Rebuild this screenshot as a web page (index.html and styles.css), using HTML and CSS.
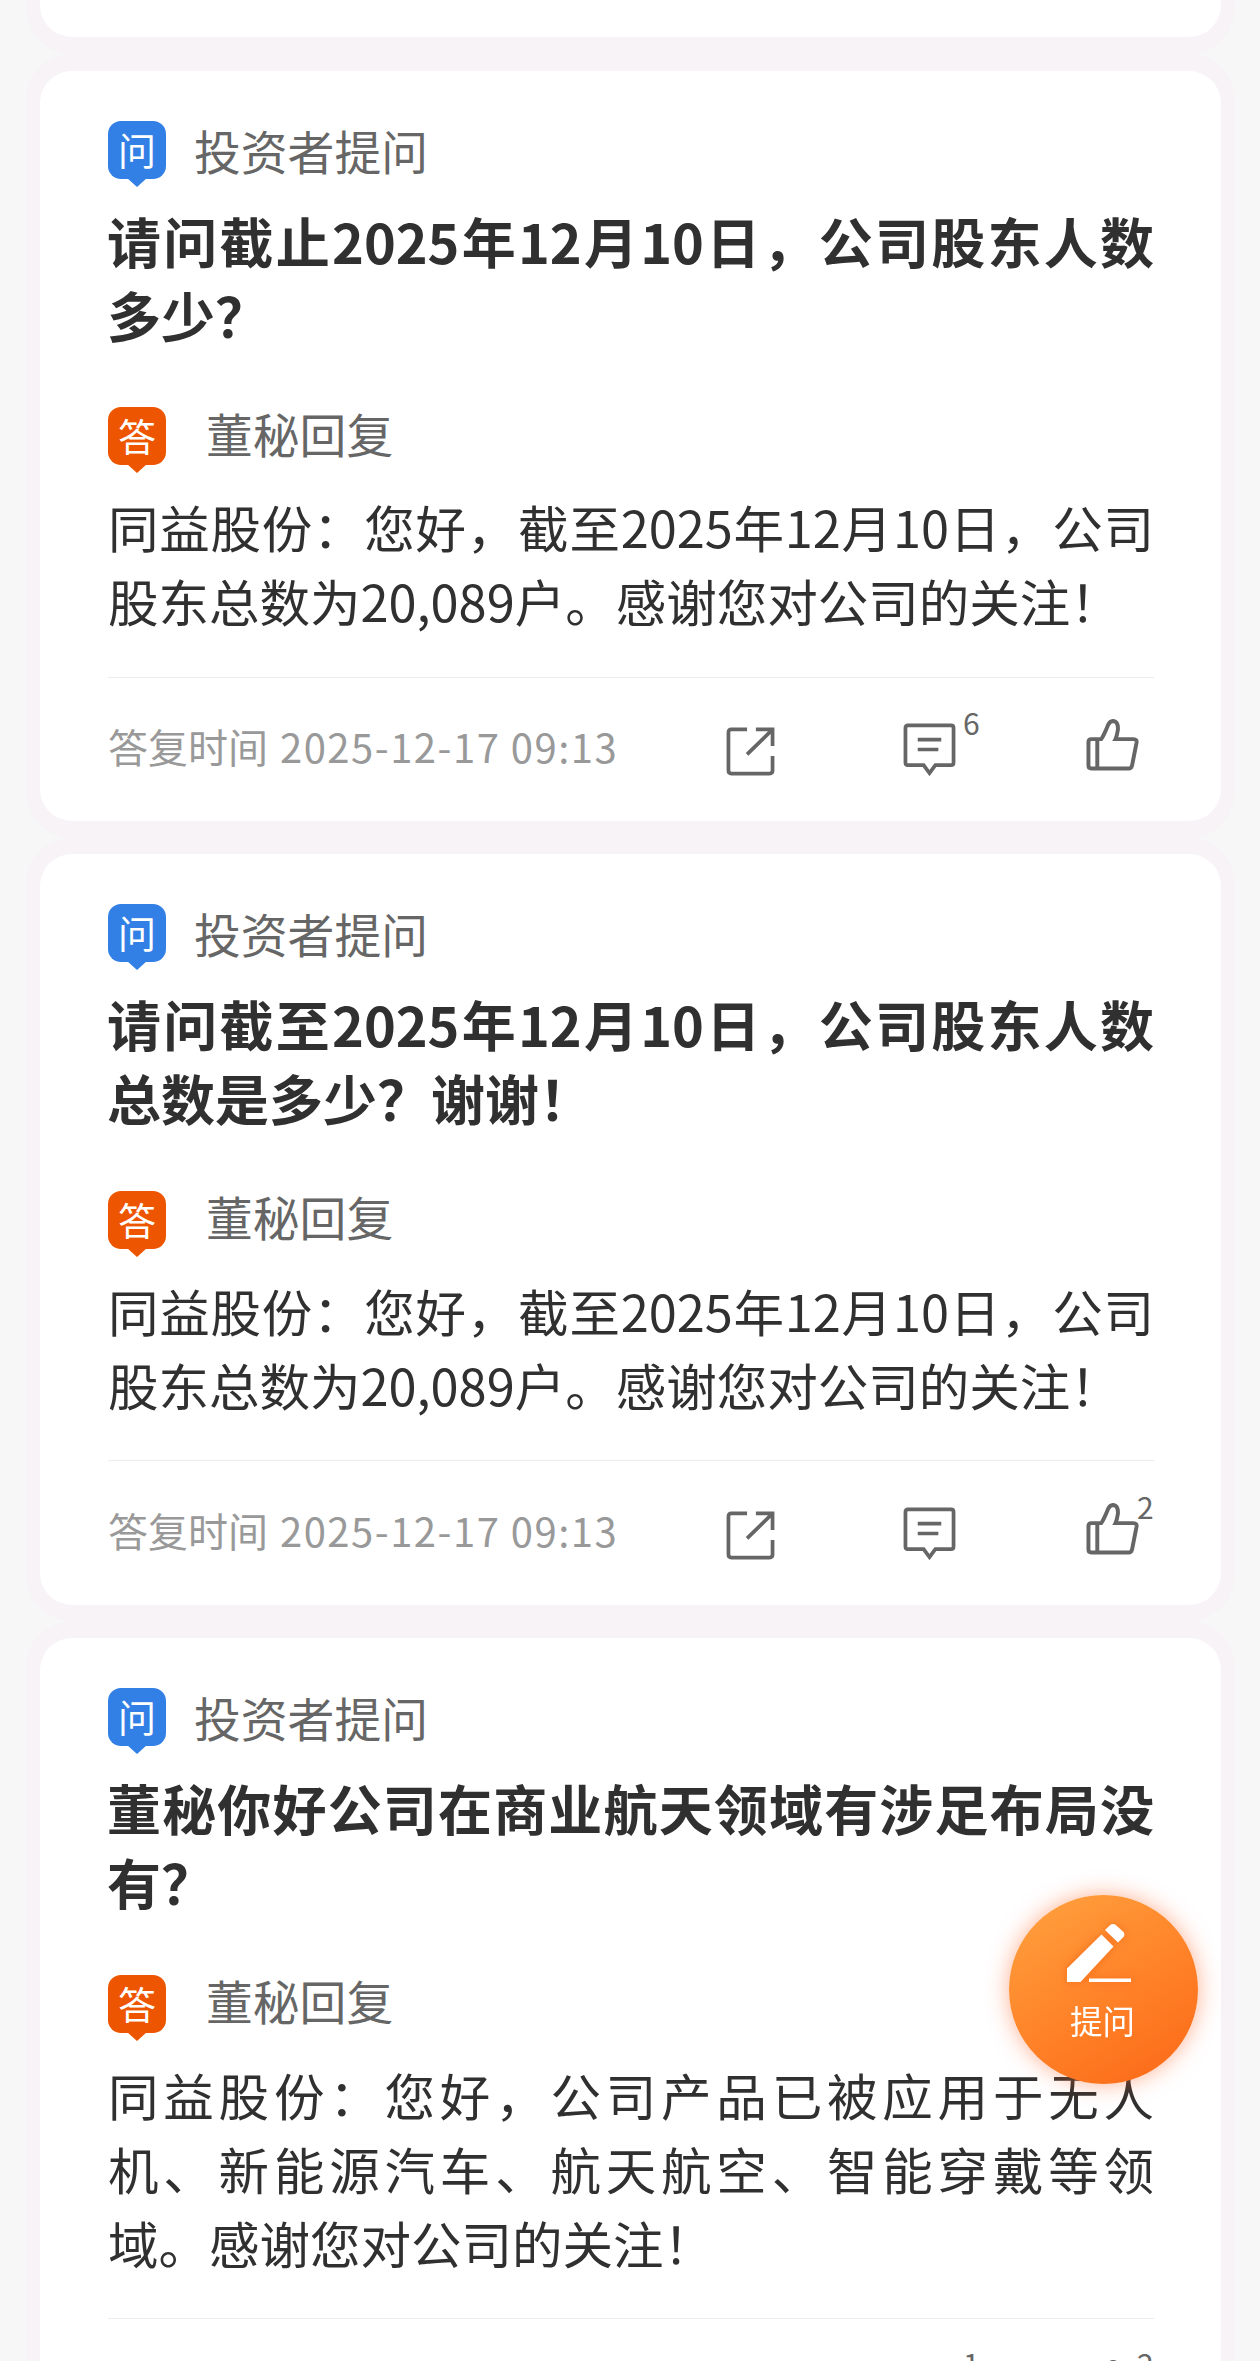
FILE: index.html
```html
<!DOCTYPE html>
<html lang="zh-CN">
<head>
  <meta charset="UTF-8">
  <meta name="viewport" content="width=device-width, initial-scale=1.0">
  <title>投资者问答</title>
  <link rel="stylesheet" href="styles.css">
</head>
<body>

  <!-- 图标 -->
  <svg class="sprite">
    <symbol id="i-share" viewBox="0 0 50 50">
      <path d="M21.5 2.5H5.5Q2.5 2.5 2.5 5.5V44.5Q2.5 47.5 5.5 47.5H44.5Q47.5 47.5 47.5 44.5V29.5M30.5 2.5H47.5V19.5M46.5 3.5L21.5 28"/>
    </symbol>
    <symbol id="i-comment" viewBox="0 0 54 54">
      <path d="M5 2.5H49Q51.5 2.5 51.5 5V40.5Q51.5 43 49 43H33L27 51L21 43H5Q2.5 43 2.5 40.5V5Q2.5 2.5 5 2.5ZM15 17H39M15 27H36"/>
    </symbol>
    <symbol id="i-like" viewBox="0 0 54 54">
      <path d="M11.5 20.5V50M5.5 20.5H15.5Q18 17 22.5 6Q24.5 1.8 28 2Q33 2.8 32.5 11Q31.5 17.5 30 20.5H48.5Q52 20.5 51.5 24L47 47Q46.3 50.5 43.5 50.5H5.5Q2.5 50.5 2.5 47.5V23.5Q2.5 20.5 5.5 20.5Z"/>
    </symbol>
  </svg>

  <main class="list">
    <div class="item item-prev"><section class="card"></section></div>

    <div class="item">
      <section class="card">
        <div class="who"><span class="badge ask">问</span><span class="name">投资者提问</span></div>
        <h2 class="question">请问截止2025年12月10日，公司股东人数多少？</h2>
        <div class="who reply"><span class="badge answer">答</span><span class="name">董秘回复</span></div>
        <p class="content">同益股份：您好，截至2025年12月10日，公司股东总数为20,089户。感谢您对公司的关注！</p>
        <div class="footer">
          <div class="time">答复时间 <span>2025-12-17 09:13</span></div>
          <div class="action share"><svg><use href="#i-share"/></svg></div>
          <div class="action comment"><svg><use href="#i-comment"/></svg><sup>6</sup></div>
          <div class="action like"><svg><use href="#i-like"/></svg></div>
        </div>
      </section>
    </div>

    <div class="item">
      <section class="card">
        <div class="who"><span class="badge ask">问</span><span class="name">投资者提问</span></div>
        <h2 class="question">请问截至2025年12月10日，公司股东人数总数是多少？谢谢！</h2>
        <div class="who reply"><span class="badge answer">答</span><span class="name">董秘回复</span></div>
        <p class="content">同益股份：您好，截至2025年12月10日，公司股东总数为20,089户。感谢您对公司的关注！</p>
        <div class="footer">
          <div class="time">答复时间 <span>2025-12-17 09:13</span></div>
          <div class="action share"><svg><use href="#i-share"/></svg></div>
          <div class="action comment"><svg><use href="#i-comment"/></svg></div>
          <div class="action like"><svg><use href="#i-like"/></svg><sup>2</sup></div>
        </div>
      </section>
    </div>

    <div class="item">
      <section class="card">
        <div class="who"><span class="badge ask">问</span><span class="name">投资者提问</span></div>
        <h2 class="question">董秘你好公司在商业航天领域有涉足布局没有？</h2>
        <div class="who reply"><span class="badge answer">答</span><span class="name">董秘回复</span></div>
        <p class="content">同益股份：您好，公司产品已被应用于无人机、新能源汽车、航天航空、智能穿戴等领域。感谢您对公司的关注！</p>
        <div class="footer">
          <div class="time"></div>
          <div class="action share"><svg><use href="#i-share"/></svg></div>
          <div class="action comment"><svg><use href="#i-comment"/></svg><sup>1</sup></div>
          <div class="action like"><svg><use href="#i-like"/></svg><sup>2</sup></div>
        </div>
      </section>
    </div>
  </main>

  <!-- 提问按钮 -->
  <button class="ask-btn">
    <svg viewBox="0 0 66 60">
      <path d="M1 45.5L35.5 11.5L47.5 23.5L14.5 59H1Z"/>
      <path d="M39 7L44.5 1.8Q47 0 49.5 1.8L57 8.5Q59.5 11 57.5 14L52 19.5Z"/>
      <path d="M23 55.5H65V59H23Z"/>
    </svg>
    <span>提问</span>
  </button>

</body>
</html>
```
FILE: styles.css
```css
* { box-sizing: border-box; }
html { overflow: hidden; }
body {
  margin: 0;
  height: 2361px;
  overflow: hidden;
  background: #f7f7f7;
  color: #303030;
  font-family: "Noto Sans CJK SC", sans-serif;
  text-spacing-trim: space-all;
}
.sprite { display: none; }

/* 列表 */
.list { padding: 0 25px 0 26px; }
.item {
  padding: 16.75px 14px;
  background: #f7f3f7;
  border-radius: 46px;
}
.item-prev { height: 54px; padding-top: 0; border-radius: 0 0 46px 46px; }
.card {
  background: #fff;
  border-radius: 32px;
  padding: 50px 67px 0 68px;
}
.item-prev .card { height: 37px; padding: 0; border-radius: 0 0 32px 32px; }

/* 提问 / 回复 */
.who { display: flex; align-items: center; height: 58px; }
.name { margin-left: 28px; font-size: 46.8px; line-height: 58px; color: #666; }
.reply { margin-top: 55.5px; }
.reply .name { margin: -7px 0 0 40px; }
.badge {
  position: relative;
  width: 58px;
  height: 58px;
  border-radius: 13px;
  color: #fff;
  font-size: 38px;
  line-height: 55px;
  text-align: center;
}
.badge::after {
  content: "";
  position: absolute;
  left: 19px;
  top: 57px;
  border: 10px solid transparent;
  border-top: 9px solid;
  border-bottom: 0;
}
.ask { background: #3280e6; }
.answer { background: #ee5500; }
.ask::after { border-top-color: #3280e6; }
.answer::after { border-top-color: #ee5500; }

.question, .content { text-align: justify; }
.question { margin: 25px 0 0 -1px; font-size: 54px; line-height: 74px; font-weight: 700; }
.content { margin: 24px 0 39px; font-size: 50.5px; line-height: 74.2px; }

/* 底部操作 */
.footer {
  display: flex;
  align-items: center;
  height: 144.3px;
  border-top: 1px solid #ececec;
  color: #666;
}
.time { width: 618px; margin-top: -7px; font-size: 40px; color: #999; white-space: nowrap; }
.time span { margin-left: 3px; letter-spacing: 1.5px; }
.action { position: relative; }
.action svg { display: block; fill: none; stroke: currentColor; stroke-width: 3.8; }
.action sup {
  position: absolute;
  top: -21px;
  left: 60px;
  font-size: 30px;
  line-height: 40px;
}
.share svg { width: 49px; height: 49px; }
.share { margin-top: 4px; }
.comment { margin-left: 128px; }
.comment svg { width: 53px; height: 53px; }
.like { margin-left: 130px; margin-top: -8px; }
.like svg { width: 53px; height: 53px; stroke-width: 4; }
.like sup { left: 51px; top: -17px; }

/* 悬浮按钮 */
.ask-btn {
  position: fixed;
  left: 1009px;
  top: 1895px;
  display: flex;
  flex-direction: column;
  align-items: center;
  justify-content: flex-start;
  width: 189px;
  height: 189px;
  padding: 28px 0 0;
  border: none;
  border-radius: 50%;
  background: linear-gradient(150deg, #ff9e3c 8%, #ff8128 55%, #fb6a18 95%);
  box-shadow: 0 0 22px rgba(255, 100, 40, 0.5);
  color: #fff;
  font: 32.5px "Noto Sans CJK SC", sans-serif;
}
.ask-btn svg { width: 66px; height: 60px; margin-right: 9px; fill: #fff; filter: drop-shadow(0 0 5px rgba(235, 80, 10, 0.5)); }
.ask-btn span { margin: 13px 2px 0 0; line-height: 48px; }
```
